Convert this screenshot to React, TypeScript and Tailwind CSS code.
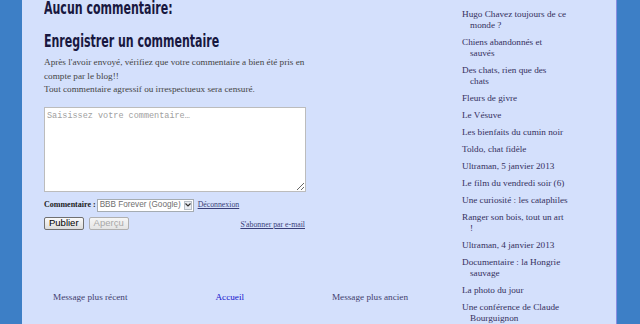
const posts: string[][] = [
  ["Hugo Chavez toujours de ce", "monde ?"],
  ["Chiens abandonnés et", "sauvés"],
  ["Des chats, rien que des", "chats"],
  ["Fleurs de givre"],
  ["Le Vésuve"],
  ["Les bienfaits du cumin noir"],
  ["Toldo, chat fidèle"],
  ["Ultraman, 5 janvier 2013"],
  ["Le film du vendredi soir (6)"],
  ["Une curiosité : les cataphiles"],
  ["Ranger son bois, tout un art", "!"],
  ["Ultraman, 4 janvier 2013"],
  ["Documentaire : la Hongrie", "sauvage"],
  ["La photo du jour"],
  ["Une conférence de Claude", "Bourguignon"],
];

const serif = "font-['Liberation_Serif',serif]";
// condensed display face, squeezed a bit more to match the blog title font
const heading =
  "font-['Liberation_Sans_Narrow','DejaVu_Sans_Condensed',sans-serif] origin-left scale-x-[0.72] whitespace-nowrap text-[17px] leading-[20px] font-bold text-[#181840]";

function Select() {
  return (
    <div className="flex h-[13px] w-[97px] items-center overflow-hidden border border-[#a5acb2] bg-white">
      <span className="flex-1 overflow-hidden whitespace-nowrap pl-[2px] font-['Liberation_Sans',sans-serif] text-[8.2px] leading-none text-[#707070]">
        BBB Forever (Google)
      </span>
      <span className="mr-px flex h-[9px] w-[8px] shrink-0 items-center justify-center border border-[#b8c0c8] bg-[#e8ecf2]">
        <svg width="6" height="4" viewBox="0 0 6 4">
          <path d="M0.5 0.5 L3 3 L5.5 0.5" stroke="#333" strokeWidth="1.2" fill="none" />
        </svg>
      </span>
    </div>
  );
}

export default function App() {
  return (
    <div className="flex h-[324px] w-[640px] overflow-hidden bg-[#d4e0fc]">
      <div className="w-[22px] shrink-0 bg-[#3d7fc6]" />

      <div className="flex flex-1">
        <main className="ml-[22px] w-[373px] shrink-0">
          <h3 className={`${heading} mt-[-2px]`}>Aucun commentaire:</h3>
          <h4 className={`${heading} mt-[13px]`}>Enregistrer un commentaire</h4>
          <p className={`${serif} mt-[5px] whitespace-nowrap text-[9.2px] leading-[13.5px] text-[#444]`}>
            Après l'avoir envoyé, vérifiez que votre commentaire a bien été pris en
            <br />
            compte par le blog!!
            <br />
            Tout commentaire agressif ou irrespectueux sera censuré.
          </p>

          <textarea
            placeholder="Saisissez votre commentaire…"
            className="mt-[10px] block h-[85px] w-[262px] border border-[#bcbcbc] bg-white p-[2px] font-['Liberation_Mono',monospace] text-[8.5px] leading-[12px] placeholder:text-[#a0a0a0]"
          />

          <div className="mt-[7px] flex h-[13px] items-center gap-[1px]">
            <span className={`${serif} text-[8px] font-bold text-[#222]`}>Commentaire :</span>
            <Select />
            <a className={`${serif} ml-[3px] text-[7.8px] text-[#3a3f78] underline`}>Déconnexion</a>
          </div>

          <div className="mt-[5px] flex w-[261px] items-end justify-between">
            <div className="flex gap-[5px]">
              <button className="h-[13px] rounded-[2px] border border-[#707070] bg-gradient-to-b from-[#fafafa] to-[#dcdcdc] px-[4px] font-['Liberation_Sans',sans-serif] text-[9.5px] leading-none text-black">
                Publier
              </button>
              <button className="h-[13px] rounded-[2px] border border-[#b0b0b0] bg-gradient-to-b from-[#f6f6f6] to-[#e4e4e4] px-[4px] font-['Liberation_Sans',sans-serif] text-[9.5px] leading-none text-[#a8a8a8]">
                Aperçu
              </button>
            </div>
            <a className={`${serif} text-[7.8px] leading-[10px] text-[#3a3f78] underline`}>S'abonner par e-mail</a>
          </div>

          <div className={`${serif} mt-[61px] flex justify-between px-[9px] text-[9.2px] leading-[13px]`}>
            <span className="text-[#423e6e]">Message plus récent</span>
            <span className="text-[#1414cc]">Accueil</span>
            <span className="text-[#423e6e]">Message plus ancien</span>
          </div>
        </main>

        <ul className={`${serif} ml-[45px] mt-[8.5px] flex flex-col gap-[6px] text-[9.2px] leading-[11px] text-[#35305e]`}>
          {posts.map((p) => (
            <li key={p[0]} className="whitespace-nowrap">
              {p.map((line, i) => (
                <div key={i} className={i ? "pl-[8px]" : ""}>
                  {line}
                </div>
              ))}
            </li>
          ))}
        </ul>
      </div>

      <div className="w-[24px] shrink-0 border-l border-[#8a8de0] bg-[#3d7fc6]" />
    </div>
  );
}
